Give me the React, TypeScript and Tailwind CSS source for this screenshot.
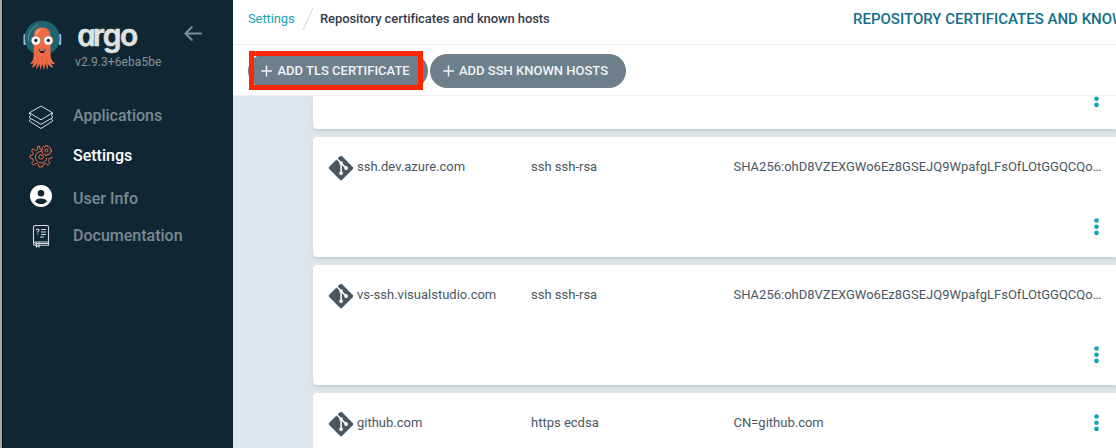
import React from 'react';
import { FaGitAlt } from 'react-icons/fa';

function ArgoMascot() {
  return (
    <svg viewBox="0 0 40 52" className="h-[52px] w-10 shrink-0">
      <rect x="0.5" y="14" width="2.5" height="11" rx="1" fill="#9cc3df" />
      <rect x="35.7" y="14" width="2.5" height="11" rx="1" fill="#9cc3df" />
      <circle cx="19.2" cy="18.2" r="17.5" fill="#1d6571" />
      <path d="M5.500 21A15 15 0 0 1 15 5" fill="none" stroke="#4f9893" strokeWidth="1" />
      <path
        d="M10.800 16C10.800 10 14 7.500 19 7.500S27.500 10 27.500 16L27.500 33C27.500 39 29.500 42 32 43.500C30 44.500 28.500 44 27.500 43L30.500 47.500C27 47.500 25.500 45 24.500 43L25 49.500C23.300 48 22.800 45.500 22.500 43.500L20.800 50L19.300 44L17.200 50L16.300 43.500C15.800 46 15 48 13 49L14 43C12.500 46 10.500 47.500 8.500 47.500L11 43C9.500 44 8 44 7 43.500C9.500 42 10.800 39 10.800 33Z"
        fill="#ed6b44"
      />
      <path d="M13.500 14.500c0-2.500 1.500-4 3.500-4.500" fill="none" stroke="#f99d7e" strokeWidth="1.800" strokeLinecap="round" />
      <path d="M15 37v6M19.300 37v6M23.500 37v6" stroke="#cf5136" strokeWidth="0.600" />
      <circle cx="12.900" cy="20.600" r="4.700" fill="#fbfaf8" stroke="#c9452d" strokeWidth="0.500" />
      <circle cx="25.300" cy="20.600" r="4.700" fill="#fbfaf8" stroke="#c9452d" strokeWidth="0.500" />
      <circle cx="12.900" cy="20.400" r="1.600" fill="#151d25" />
      <circle cx="25.300" cy="20.400" r="1.600" fill="#151d25" />
      <path d="M16 29q3.200 1.500 6.400 0q-.5 4.200-3.200 4.200t-3.200-4.200Z" fill="#241a1e" />
      <path d="M17 29.600q2.200.8 4.400 0v.9h-4.400Z" fill="white" />
    </svg>
  );
}

function BackArrow() {
  return (
    <svg viewBox="0 0 20 18" className="h-[18px] w-5" fill="none" stroke="#7d8b94" strokeWidth="2.200" strokeLinecap="round" strokeLinejoin="round">
      <path d="M17 8.500H1.700M7.700 2.300l-6.200 6.200 6.200 6.200" />
    </svg>
  );
}

function LayersIcon() {
  return (
    <svg viewBox="0 0 26 26" className="relative top-[2px] h-[26px] w-[26px]" fill="none" stroke="#d7dcdf" strokeWidth="1" strokeLinejoin="round">
      <path d="M13 1L24.500 7.800L13 14.800L1.500 7.800Z" />
      <path d="M1.500 7.800v1.600L3 10.300L1.500 11.500v1.300L13 19.300L24.500 12.800v-1.300L23 10.300L24.500 9.400V7.800" />
      <path d="M3 13.700L1.500 15v1.200L13 23.500L24.500 16.200V15L23 13.700" />
    </svg>
  );
}

function GearsIcon() {
  return (
    <svg viewBox="0 0 24 24" className="h-6 w-6" fill="none" stroke="#e46a43" strokeWidth="1" strokeLinejoin="round">
      <circle cx="12" cy="13" r="2.200" />
      <path d="M12.500 5.500L11 5L10.500 2L8.500 2.500L8.700 5.500L6.500 6.500L4 4.700L2.500 7L4.400 9L3.600 11L1 11.500V14L3.700 14.700L4.500 17L2.500 19.200L4.500 21L7 19.300L9.500 20.500L10 23H13.500L14 20.500L16.500 19.300L19 21.300L21 19L19.300 16.700L20.200 14.500L23 14V12.500" />
      <path d="M12 7.500a5.700 5.700 0 1 0 5.700 6.500" />
      <circle cx="17.500" cy="6.500" r="1.500" />
      <path d="M16.600 1.500h1.800l.4 1.500 1.500-.5 1.200 1.300-.6 1.300 1.600.8v1.600l-1.600.5.5 1.500-1.400 1.200-1.400-.7-.6 1.500h-1.600l-.5-1.500-1.500.6-1.200-1.300.7-1.400-1.500-.7V5.700l1.500-.5-.5-1.500 1.300-1.200 1.300.7Z" />
    </svg>
  );
}

function UserIcon() {
  return (
    <svg viewBox="0 0 22 22" className="h-[22px] w-[22px]">
      <circle cx="11" cy="11" r="11" fill="white" />
      <circle cx="11" cy="8.200" r="3.300" fill="#102733" />
      <path d="M5 16.400c1-2.300 3.400-2.900 6-2.900s5 .6 6 2.900c-3 3.400-9 3.400-12 0Z" fill="#102733" />
    </svg>
  );
}

function BookIcon() {
  return (
    <svg viewBox="0 0 18 24" className="h-6 w-[18px]" fill="none" stroke="#d2d8db" strokeWidth="1.100">
      <path d="M3.500 1.500H15a1.500 1.500 0 0 1 1.500 1.500v15H3.300a1.700 1.700 0 0 0-1.800 1.700V3.300a1.800 1.800 0 0 1 2-1.800Z" />
      <path d="M1.500 19.500c0 1.200.8 1.900 2 1.900H4M16.500 18v3.300H7M4.500 18.500v4.300l1.300-1 1.200 1v-4.300M3 19.500h13" />
      <path d="M4.300 6.300C4.300 4.500 7 4.600 7 6.200c0 1-1.300 1-1.300 2.200M5.700 9.500v1M9 5.500h5M9 8h5M9 10.500h5M8 13h4" />
    </svg>
  );
}

function PlusIcon() {
  return (
    <svg viewBox="0 0 12 12" className="-mt-px h-3 w-3 shrink-0" fill="none" stroke="#f1f3f4" strokeWidth="1.500">
      <path d="M5.500 .5v11M.3 6h10.700" />
    </svg>
  );
}

interface NavItemProps {
  icon: React.ReactNode;
  label: string;
  active?: boolean;
  className: string;
}

function NavItem({ icon, label, active, className }: NavItemProps) {
  return (
    <a className={`flex items-center ${className}`}>
      <span className="-mr-[9px] -ml-[3px] flex w-[82px] shrink-0 justify-center">{icon}</span>
      <span className={`text-[16px] leading-5 font-medium ${active ? 'text-white' : 'text-[#7c8992]'}`}>{label}</span>
    </a>
  );
}

function Wordmark() {
  return (
    <div className="-mt-[3px] flex h-[38px] items-baseline font-[Inter] text-[30px] leading-[34px] font-semibold tracking-[-1.3px] text-[#dfe3e2] [-webkit-text-stroke:0.6px_#dfe3e2]">
      <span className="inline-block [transform:translateX(1.5px)_skewX(12deg)_scaleX(1.08)] font-['Open_Sans'] text-[31px] italic">a</span>
      <span className="ml-px">rgo</span>
    </div>
  );
}

function Sidebar() {
  return (
    <aside className="h-full w-[233px] shrink-0 border-l-2 border-[#a4a6a5] bg-[#102733]">
      <div className="h-full border-l border-black">
        <div className="flex h-[90px] pt-[20px] pl-[20px]">
          <ArgoMascot />
          <div className="ml-[12px] w-[109px] shrink-0">
            <Wordmark />
            <div className="text-[12px] leading-[14px] tracking-[0.08px] text-[#87939b]">v2.9.3+6eba5be</div>
          </div>
          <div className="pt-[5px]"><BackArrow /></div>
        </div>
        <nav>
          <NavItem icon={<LayersIcon />} label="Applications" className="mt-[13px] h-[26px]" />
          <NavItem icon={<GearsIcon />} label="Settings" active className="mt-[14px] h-[26px]" />
          <div className="flex h-[42px] items-start pt-[15px]">
            <span className="mt-px flex w-[70px] shrink-0 pl-[27px]"><UserIcon /></span>
            <span className="mt-[5px] text-[16px] leading-5 font-medium text-[#7c8992]">User Info</span>
          </div>
          <NavItem icon={<BookIcon />} label="Documentation" className="mt-[13px] h-6" />
        </nav>
      </div>
    </aside>
  );
}

interface Certificate {
  host: string;
  kind: string;
  info: string;
}

const certificates: Certificate[] = [
  { host: 'ssh.dev.azure.com', kind: 'ssh ssh-rsa', info: 'SHA256:ohD8VZEXGWo6Ez8GSEJQ9WpafgLFsOfLOtGGQCQo…' },
  { host: 'vs-ssh.visualstudio.com', kind: 'ssh ssh-rsa', info: 'SHA256:ohD8VZEXGWo6Ez8GSEJQ9WpafgLFsOfLOtGGQCQo…' },
];

function Dots() {
  return (
    <svg viewBox="0 0 6 18" className="h-[18px] w-[6px] shrink-0" fill="#0fa3b8">
      <circle cx="3.500" cy="2.500" r="2.300" />
      <circle cx="3.500" cy="8.700" r="2.300" />
      <circle cx="3.500" cy="14.900" r="2.300" />
    </svg>
  );
}

function CertificateCells({ host, kind, info }: Certificate) {
  return (
    <>
      <div className="flex w-[202px] shrink-0 items-center">
        <FaGitAlt size={28} color="#495763" className="relative top-px -mr-px -ml-[2px] shrink-0" />
        <span className="ml-[3px]">{host}</span>
      </div>
      <div className="w-[202px] shrink-0">{kind}</div>
      <div className="ml-[0.5px] w-[360px] shrink-0 whitespace-nowrap">{info}</div>
    </>
  );
}

export default function App() {
  return (
    <div className="flex h-[448px] w-[1116px] overflow-hidden bg-[#dee6eb] font-[Roboto,sans-serif] text-[#495763]">
      <Sidebar />
      <main className="flex min-w-0 flex-1 flex-col">
        <header className="flex h-[45px] shrink-0 items-center overflow-hidden border-b border-[#eceeef] bg-white pb-[6px] pl-[15px]">
          <span className="w-[47px] shrink-0 text-[13px] tracking-[-0.1px] text-[#17a2b4]">Settings</span>
          <svg viewBox="0 0 12 24" className="ml-[7px] h-6 w-3 shrink-0" stroke="#ced5d9" fill="none"><path d="M1 23L11 1" /></svg>
          <span className="ml-[6px] w-[533px] shrink-0 text-[13px] font-medium tracking-[-0.1px] text-[#363c4a]">Repository certificates and known hosts</span>
          <span className="shrink-0 text-[15px] font-medium whitespace-nowrap text-[#126f8a]">REPOSITORY CERTIFICATES AND KNOWN HOSTS</span>
        </header>
        <div className="flex h-[51px] shrink-0 gap-[2px] border-b border-[#eceeef] bg-white pt-[9px] pl-[15px] text-[13px] font-medium text-[#f1f3f4]">
          <button className="relative flex h-[34px] w-[180px] items-center gap-[4.5px] rounded-full bg-[#6d7f8b] pl-[13px] whitespace-nowrap">
            <PlusIcon />ADD TLS CERTIFICATE
            <span className="absolute top-[-3px] left-[1px] h-[39px] w-[174px] border-[5px] border-[#ff2600]" />
          </button>
          <button className="flex h-[34px] w-[196px] items-center gap-[4px] rounded-full bg-[#6d7f8b] pl-[13px] whitespace-nowrap">
            <PlusIcon />ADD SSH KNOWN HOSTS
          </button>
        </div>
        <section className="flex min-h-0 flex-1 flex-col overflow-hidden pl-[80px] text-[13px]">
          <div className="flex h-[33px] shrink-0 items-start justify-end rounded-bl bg-white pr-[17px] shadow-[0_2px_3px_#c5ced3]">
            <div className="flex h-[12px] items-end overflow-hidden"><Dots /></div>
          </div>
          {certificates.map((cert) => (
            <article key={cert.host} className="mt-2 h-[120px] shrink-0 rounded-l bg-white shadow-[0_2px_3px_#c5ced3]">
              <div className="flex h-[60px] items-center pl-4"><CertificateCells {...cert} /></div>
              <div className="flex h-[60px] items-center justify-end pr-[17px] pb-px"><Dots /></div>
            </article>
          ))}
          <article className="mt-2 flex h-[60px] shrink-0 items-center rounded-l bg-white pl-4">
            <CertificateCells host="github.com" kind="https ecdsa" info="CN=github.com" />
            <span className="-ml-px"><Dots /></span>
          </article>
        </section>
      </main>
    </div>
  );
}
